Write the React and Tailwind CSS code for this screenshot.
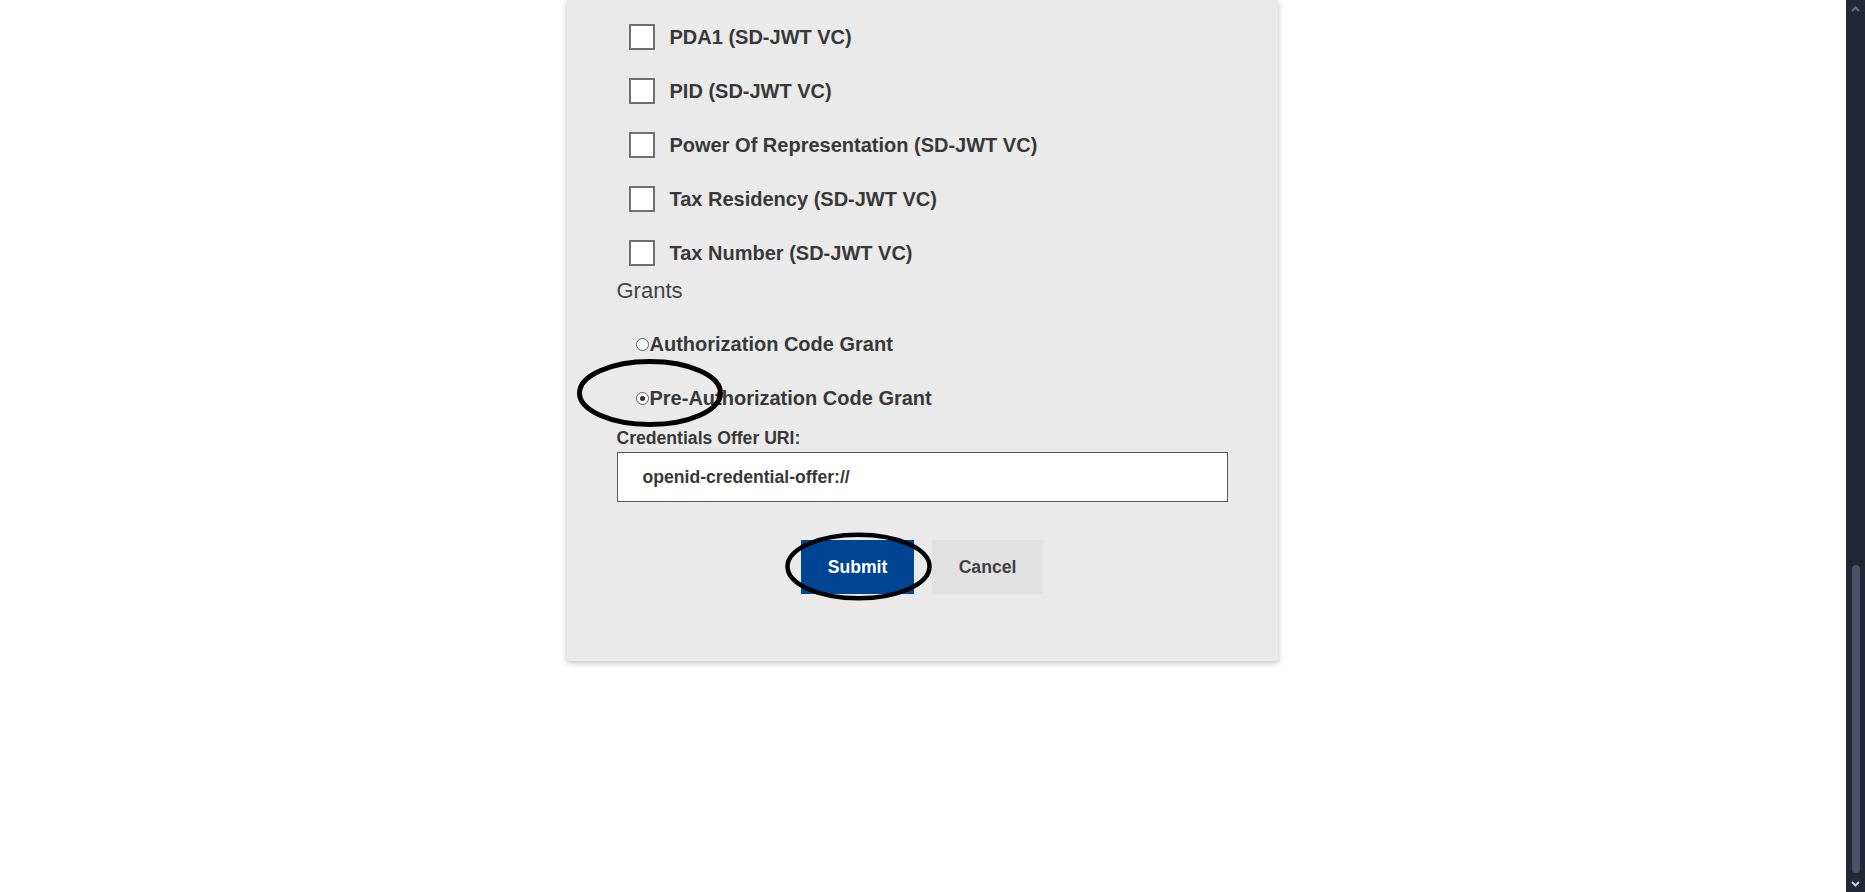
import React from "react";

const checkboxes = [
  "PDA1 (SD-JWT VC)",
  "PID (SD-JWT VC)",
  "Power Of Representation (SD-JWT VC)",
  "Tax Residency (SD-JWT VC)",
  "Tax Number (SD-JWT VC)",
];

function Radio({ checked, label }) {
  return (
    <label className="flex h-[54px] items-center pl-[19px]">
      <span className="flex h-[13px] w-[13px] items-center justify-center rounded-full border border-[#5a5a5a] bg-white">
        {checked && <span className="h-[5px] w-[5px] rounded-full bg-[#333]" />}
      </span>
      <span className="ml-[1px] text-[20px] font-bold text-[#383838]">{label}</span>
    </label>
  );
}

export default function App() {
  return (
    <div className="flex h-[892px] w-[1865px] overflow-hidden bg-white font-['Liberation_Sans',Arial,sans-serif]">
      <main className="relative flex-1">
        <div className="mx-auto w-[711px] -translate-x-[1px] bg-[#eaeaea] px-[50px] pb-[67px] pt-[10px] shadow-[0_2px_6px_rgba(0,0,0,0.25)]">
          {checkboxes.map((c) => (
            <label key={c} className="flex h-[54px] items-center pl-[12px]">
              <span className="h-[26px] w-[26px] border-2 border-[#707070] bg-white" />
              <span className="ml-[15px] text-[20px] font-bold text-[#383838]">{c}</span>
            </label>
          ))}
          <div className="-mt-[2px] text-[22px] leading-[26px] text-[#444]">Grants</div>
          <div className="mt-[13px]">
            <Radio label="Authorization Code Grant" />
            <Radio checked label="Pre-Authorization Code Grant" />
          </div>
          <div className="mt-[3px] text-[17.6px] font-bold leading-[20px] text-[#383838]">
            Credentials Offer URI:
          </div>
          <div className="mt-[4px] flex h-[50px] w-full items-center border border-[#555] bg-white pl-[25px] text-[17.6px] font-bold text-[#383838]">
            openid-credential-offer://
          </div>
          <div className="mt-[38px] flex justify-center gap-[18px]">
            <button className="h-[54px] w-[113px] bg-[#004494] text-[17.6px] font-bold text-white">
              Submit
            </button>
            <button className="h-[54px] w-[111px] bg-[#e1e1e1] text-[17.6px] font-bold text-[#404040]">
              Cancel
            </button>
          </div>
        </div>
        <svg
          className="pointer-events-none absolute left-0 top-0"
          width="1846"
          height="892"
          viewBox="0 0 1846 892"
        >
          <ellipse cx="650" cy="393" rx="70.5" ry="31.5" fill="none" stroke="#000" strokeWidth="5" />
          <ellipse cx="858.5" cy="566.5" rx="71" ry="31.8" fill="none" stroke="#000" strokeWidth="4.5" />
        </svg>
      </main>
      <div className="flex w-[19px] flex-col items-center bg-[#232734]">
        <div className="flex h-[17px] w-full items-center justify-center">
          <svg width="9" height="6" viewBox="0 0 9 6">
            <polyline points="1,5 4.5,1.5 8,5" fill="none" stroke="#6b6f80" strokeWidth="2" />
          </svg>
        </div>
        <div className="flex w-full flex-1 flex-col items-center">
          <div className="mt-[548px] h-[308px] w-[8px] rounded-full bg-[#4b4f68]" />
        </div>
        <div className="flex h-[17px] w-full items-center justify-center">
          <svg width="9" height="6" viewBox="0 0 9 6">
            <polyline points="1,1 4.5,4.5 8,1" fill="none" stroke="#d0d0d8" strokeWidth="2" />
          </svg>
        </div>
      </div>
    </div>
  );
}
